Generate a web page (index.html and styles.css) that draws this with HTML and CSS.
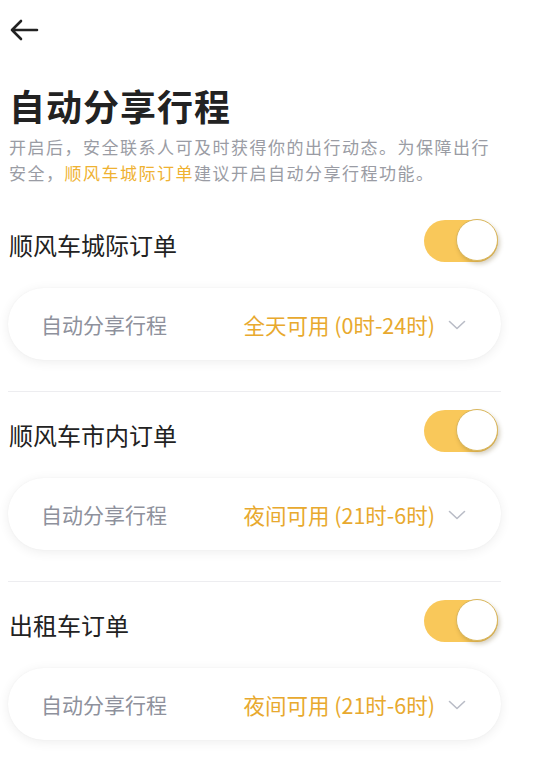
FILE: index.html
```html
<!DOCTYPE html>
<html lang="zh-CN">
<head>
<meta charset="utf-8">
<link rel="stylesheet" href="styles.css">
</head>
<body>
<div class="page">
  <div class="topbar">
    <svg class="back" viewBox="0 0 30 24" width="30" height="24"><path d="M28 12H3M12 3L3 12l9 9" fill="none" stroke="#222" stroke-width="2.6" stroke-linecap="round" stroke-linejoin="round"/></svg>
  </div>
  <h1 class="title">自动分享行程</h1>
  <p class="desc"><span class="line">开启后，安全联系人可及时获得你的出行动态。为保障出行</span><span class="line">安全，<span class="hl">顺风车城际订单</span>建议开启自动分享行程功能。</span></p>

  <section class="sec">
    <div class="row">
      <span class="name">顺风车城际订单</span>
      <span class="toggle"><span class="knob"></span></span>
    </div>
    <div class="card">
      <span class="label">自动分享行程</span>
      <span class="value">全天可用 (0时-24时)</span>
      <svg class="chev" viewBox="0 0 18 10" width="18" height="10"><path d="M1.5 1.5L9 8.5l7.5-7" fill="none" stroke="#b9bcc6" stroke-width="1.6" stroke-linecap="round" stroke-linejoin="round"/></svg>
    </div>
  </section>

  <section class="sec">
    <div class="row">
      <span class="name">顺风车市内订单</span>
      <span class="toggle"><span class="knob"></span></span>
    </div>
    <div class="card">
      <span class="label">自动分享行程</span>
      <span class="value">夜间可用 (21时-6时)</span>
      <svg class="chev" viewBox="0 0 18 10" width="18" height="10"><path d="M1.5 1.5L9 8.5l7.5-7" fill="none" stroke="#b9bcc6" stroke-width="1.6" stroke-linecap="round" stroke-linejoin="round"/></svg>
    </div>
  </section>

  <section class="sec last">
    <div class="row">
      <span class="name">出租车订单</span>
      <span class="toggle"><span class="knob"></span></span>
    </div>
    <div class="card">
      <span class="label">自动分享行程</span>
      <span class="value">夜间可用 (21时-6时)</span>
      <svg class="chev" viewBox="0 0 18 10" width="18" height="10"><path d="M1.5 1.5L9 8.5l7.5-7" fill="none" stroke="#b9bcc6" stroke-width="1.6" stroke-linecap="round" stroke-linejoin="round"/></svg>
    </div>
  </section>
</div>
</body>
</html>
```
FILE: styles.css
```css
html, body {
  margin: 0;
  padding: 0;
  background: #fff;
}
body {
  font-family: "Noto Sans CJK SC", "Noto Sans", sans-serif;
  color: #222;
}
.page {
  width: 493px;
  padding: 0 33px 0 8px;
}
.topbar {
  height: 60px;
  display: flex;
  align-items: center;
}
.back {
  display: block;
  margin-left: 1px;
}
.title {
  margin: 21px 0 0 1px;
  font-size: 36px;
  line-height: 48px;
  font-weight: 700;
  letter-spacing: 1px;
  color: #222;
}
.desc {
  margin: 5px 0 0 1px;
  font-size: 17px;
  line-height: 26px;
  letter-spacing: 1.5px;
  color: #9a9ca4;
}
.line {
  display: block;
  white-space: nowrap;
}
.hl {
  color: #efb232;
}
.sec {
  padding-top: 35px;
  padding-bottom: 31px;
  border-bottom: 1px solid #ededf0;
}
.sec + .sec {
  padding-top: 19px;
}
.sec.last {
  border-bottom: none;
}
.row {
  height: 44px;
  display: flex;
  align-items: center;
  justify-content: space-between;
}
.name {
  font-size: 24px;
  padding-left: 1px;
  color: #222;
  margin-top: 3px;
}
.toggle {
  position: relative;
  width: 74px;
  height: 42px;
  border-radius: 21px;
  background: #f9c85a;
  margin-right: 3px;
  margin-top: -4px;
}
.knob {
  position: absolute;
  right: 0;
  top: -1px;
  width: 42px;
  height: 42px;
  box-sizing: border-box;
  border-radius: 50%;
  background: #fff;
  border: 1.5px solid #d9b65c;
  box-shadow: 2px 3px 4px rgba(90, 70, 20, 0.25);
}
.card {
  margin-top: 23px;
  height: 72px;
  border-radius: 36px;
  background: #fff;
  box-shadow: 0 2px 12px rgba(0, 0, 0, 0.07), 0 0 2px rgba(0, 0, 0, 0.04);
  display: flex;
  align-items: center;
  padding: 0 35px 0 33px;
  box-sizing: border-box;
}
.label {
  font-size: 21px;
  color: #8e919c;
  flex: 1;
}
.value {
  font-size: 21.5px;
  color: #e8a92e;
}
.chev {
  margin-left: 13px;
  margin-top: 2px;
}
```
